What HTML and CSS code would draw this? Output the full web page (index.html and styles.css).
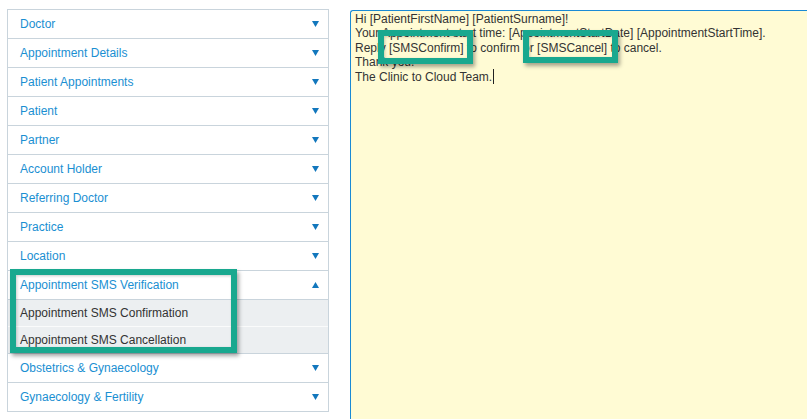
FILE: index.html
```html
<!DOCTYPE html>
<html lang="en">
<head>
  <meta charset="UTF-8" />
  <title>SMS Templates</title>
  <link rel="stylesheet" href="styles.css">
</head>
<body>
  <div class="page">
    <ul class="menu">
      <li class="item"><span>Doctor</span><svg class="arrow" viewBox="0 0 7 6"><path d="M0 0H7L3.5 6Z"/></svg></li>
      <li class="item"><span>Appointment Details</span><svg class="arrow" viewBox="0 0 7 6"><path d="M0 0H7L3.5 6Z"/></svg></li>
      <li class="item"><span>Patient Appointments</span><svg class="arrow" viewBox="0 0 7 6"><path d="M0 0H7L3.5 6Z"/></svg></li>
      <li class="item"><span>Patient</span><svg class="arrow" viewBox="0 0 7 6"><path d="M0 0H7L3.5 6Z"/></svg></li>
      <li class="item"><span>Partner</span><svg class="arrow" viewBox="0 0 7 6"><path d="M0 0H7L3.5 6Z"/></svg></li>
      <li class="item"><span>Account Holder</span><svg class="arrow" viewBox="0 0 7 6"><path d="M0 0H7L3.5 6Z"/></svg></li>
      <li class="item"><span>Referring Doctor</span><svg class="arrow" viewBox="0 0 7 6"><path d="M0 0H7L3.5 6Z"/></svg></li>
      <li class="item"><span>Practice</span><svg class="arrow" viewBox="0 0 7 6"><path d="M0 0H7L3.5 6Z"/></svg></li>
      <li class="item"><span>Location</span><svg class="arrow" viewBox="0 0 7 6"><path d="M0 0H7L3.5 6Z"/></svg></li>
      <li class="item open"><span>Appointment SMS Verification</span><svg class="arrow" viewBox="0 0 7 6"><path d="M0 6H7L3.5 0Z"/></svg></li>
      <li class="sub">Appointment SMS Confirmation</li>
      <li class="sub">Appointment SMS Cancellation</li>
      <li class="item"><span>Obstetrics &amp; Gynaecology</span><svg class="arrow" viewBox="0 0 7 6"><path d="M0 0H7L3.5 6Z"/></svg></li>
      <li class="item"><span>Gynaecology &amp; Fertility</span><svg class="arrow" viewBox="0 0 7 6"><path d="M0 0H7L3.5 6Z"/></svg></li>
    </ul>

    <div class="editor">
      <div>Hi [PatientFirstName] [PatientSurname]!</div>
      <div>Your Appointment start time: [AppointmentStartDate] [AppointmentStartTime].</div>
      <div>Reply [SMSConfirm] to confirm or [SMSCancel] to cancel.</div>
      <div>Thank you.</div>
      <div>The Clinic to Cloud Team.<span class="caret"></span></div>
    </div>
  </div>

  <!-- callout boxes drawn over the screenshot -->
  <div class="callout callout-menu"></div>
  <div class="callout callout-confirm"></div>
  <div class="callout callout-cancel"></div>
</body>
</html>
```

FILE: styles.css
```css
body { margin: 0; font-family: "Liberation Sans", Arial, sans-serif; font-size: 12px; background: #fff; overflow: hidden; position: relative; height: 419px; }
.page { display: flex; align-items: flex-start; padding: 9px 0 0 7px; gap: 21px; }

.menu { list-style: none; margin: 0; padding: 0; width: 320px; flex-shrink: 0; border: 1px solid #c9d4dc; }
.menu li { box-sizing: border-box; display: flex; align-items: center; padding: 0 9px 0 12px; }
.item { height: 29px; border-top: 1px solid #c9d4dc; color: #1a8fd2; justify-content: space-between; }
.item:first-child { height: 28px; border-top: none; }
.item .arrow { width: 7px; height: 6px; fill: #1277bd; }
.sub { height: 27px; background: #eceff1; color: #333; border-top: 1px solid #c9d4dc; }
.sub + .sub { border-top-color: #fafbfb; }
.sub + .item { border-top-color: #c9d4dc; }

/* editor is cut off by the frame on the right and bottom */
.editor { width: 457px; height: 409px; flex-shrink: 0; margin-top: 1px; box-sizing: border-box; padding: 1px 4px; background: #fffbd4; border: 1px solid #1a8ad4; border-right: none; border-bottom: none; border-radius: 3px 0 0 0; color: #333; line-height: 14.3px; white-space: nowrap; }
.caret { display: inline-block; width: 1px; height: 15px; background: #222; vertical-align: -3px; margin-left: 1px; }

.callout { position: absolute; box-sizing: border-box; border: 6px solid #19a88f; box-shadow: 2px 3px 4px rgba(0,0,0,0.35), inset 1px 1px 3px rgba(0,0,0,0.2); }
.callout-menu { left: 10px; top: 269px; width: 227px; height: 84px; }
.callout-confirm { left: 378px; top: 30px; width: 95px; height: 34px; }
.callout-cancel { left: 523px; top: 30px; width: 95px; height: 33px; }
```
